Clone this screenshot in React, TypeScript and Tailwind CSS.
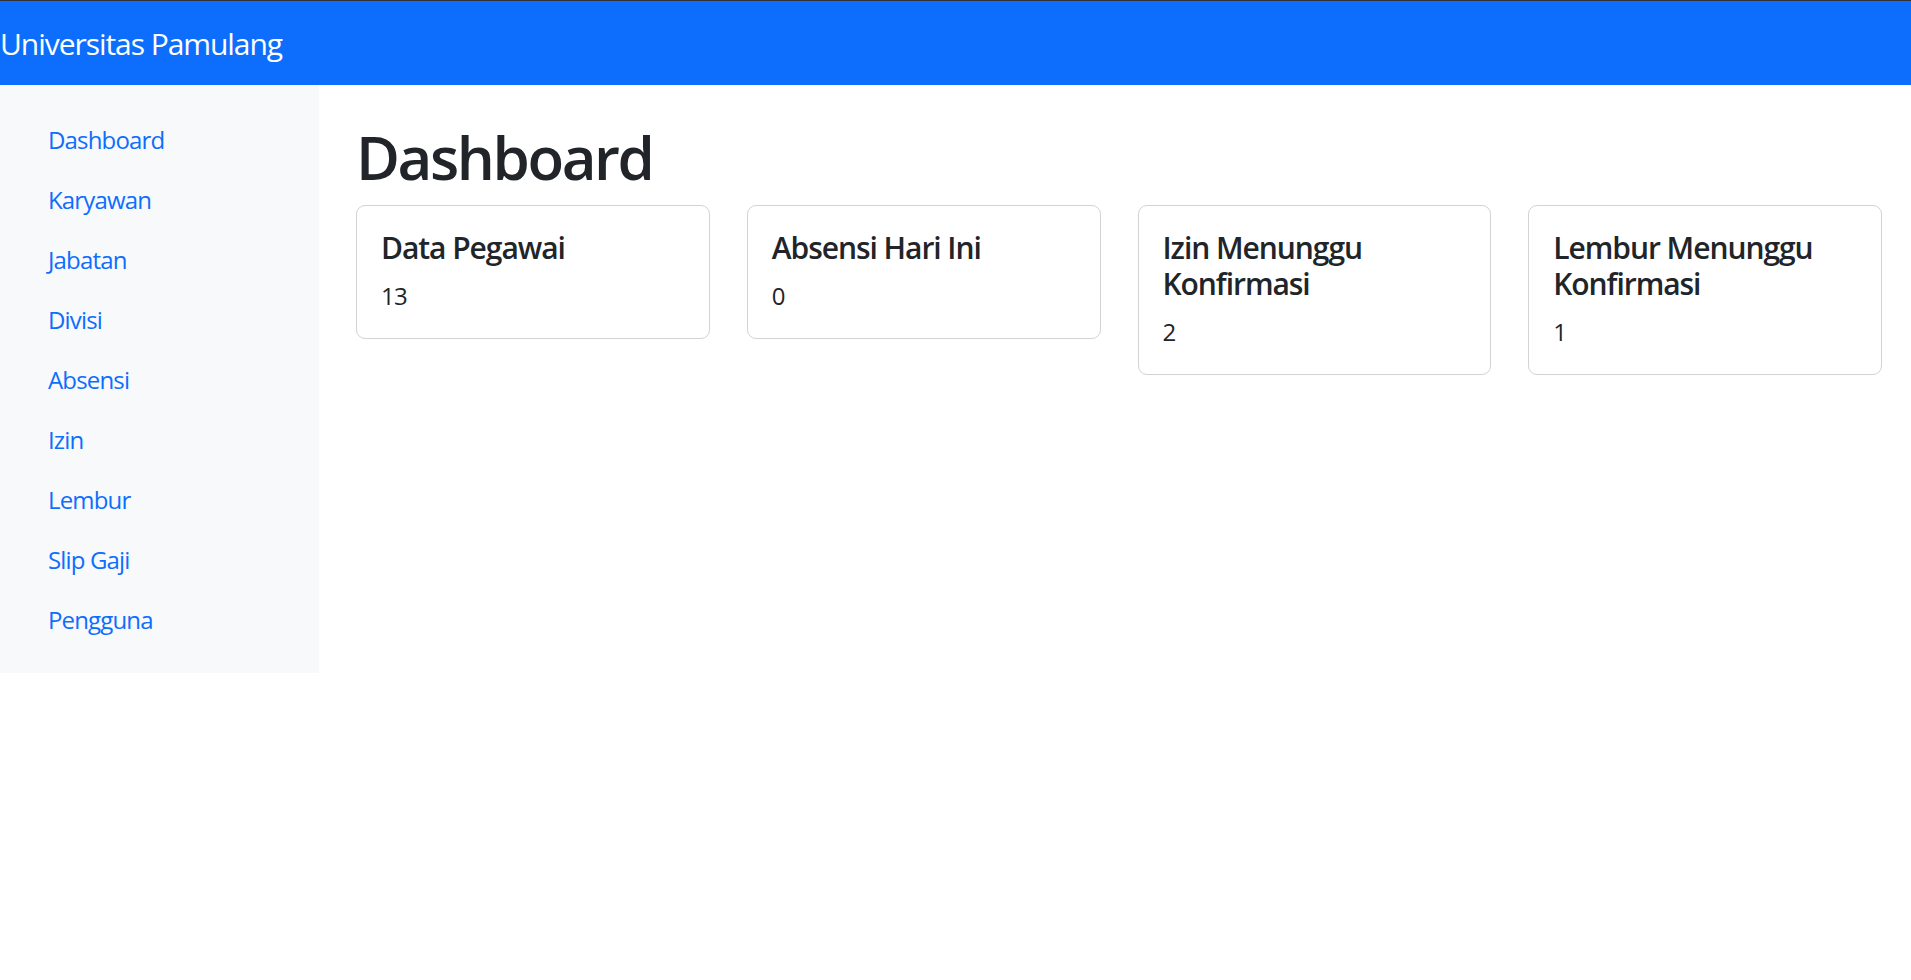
import React from 'react';

const menu = ['Dashboard', 'Karyawan', 'Jabatan', 'Divisi', 'Absensi', 'Izin', 'Lembur', 'Slip Gaji', 'Pengguna'];

const stats = [
  { title: 'Data Pegawai', value: '13' },
  { title: 'Absensi Hari Ini', value: '0' },
  { title: 'Izin Menunggu Konfirmasi', value: '2' },
  { title: 'Lembur Menunggu Konfirmasi', value: '1' },
];

const App = () => {
  return (
    <div className="min-h-screen bg-white text-[#212529] font-['Open_Sans',sans-serif]">
      <nav className="border-t border-[#333] bg-[#0d6efd] py-3">
        <a href="#" className="block py-[7.5px] text-[30px] leading-[45px] tracking-[-0.035em] text-white">
          Universitas Pamulang
        </a>
      </nav>

      <div className="flex">
        <aside className="w-[319px] shrink-0 self-start bg-[#f8f9fa] p-6">
          <ul className="flex flex-col">
            {menu.map((item) => (
              <li key={item}>
                <a href="#" className="block px-6 pt-[13px] pb-[11px] text-[24px] leading-9 tracking-[-0.035em] text-[#0d6efd]">
                  {item}
                </a>
              </li>
            ))}
          </ul>
        </aside>

        <main className="flex-1 pl-[37px] pr-[29px] pt-9">
          <h1 className="mb-3 text-[60px] font-semibold leading-[72px] tracking-[-0.04em]">Dashboard</h1>
          <div className="grid grid-cols-4 items-start gap-[37px]">
            {stats.map((s) => (
              <div key={s.title} className="rounded-[9px] border border-[#d3d3d3] bg-white p-6">
                <h5 className="mb-3 text-[30px] font-semibold leading-9 tracking-[-0.035em]">{s.title}</h5>
                <p className="text-[24px] leading-9 tracking-[-0.03em]">{s.value}</p>
              </div>
            ))}
          </div>
        </main>
      </div>
    </div>
  );
};

export default App;
